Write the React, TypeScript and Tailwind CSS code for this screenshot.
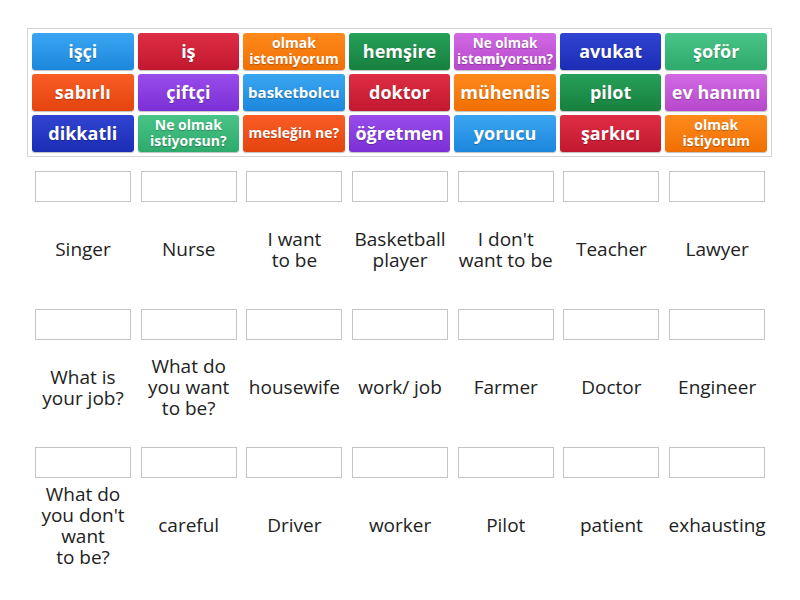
import React from 'react';

type Tile = { label: React.ReactNode; tone: keyof typeof TONES; size: string };

const TONES = {
  blue: 'from-[#3aa6f2] to-[#1b87dc]',
  red: 'from-[#de2d45] to-[#c2182f]',
  orange: 'from-[#ff8a1c] to-[#f06f00]',
  darkgreen: 'from-[#26a058] to-[#17803f]',
  pink: 'from-[#d26ae4] to-[#b747cc]',
  navy: 'from-[#3044d2] to-[#1c2db5]',
  green: 'from-[#48c488] to-[#2eaa6c]',
  redorange: 'from-[#f95d24] to-[#e4430d]',
  purple: 'from-[#9a4cec] to-[#7b2fd6]',
};

const BIG = 'text-[18px] leading-[20px]';
const TWO = 'text-[14px] leading-[16px]';

const TILES: Tile[] = [
  { label: 'işçi', tone: 'blue', size: BIG },
  { label: 'iş', tone: 'red', size: BIG },
  { label: <>olmak<br />istemiyorum</>, tone: 'orange', size: TWO },
  { label: 'hemşire', tone: 'darkgreen', size: BIG },
  {
    label: <>Ne olmak<br />ist<span className="font-extrabold">emi</span>yorsun?</>,
    tone: 'pink',
    size: 'text-[13.5px] leading-[16px]',
  },
  { label: 'avukat', tone: 'navy', size: BIG },
  { label: 'şoför', tone: 'green', size: BIG },

  { label: 'sabırlı', tone: 'redorange', size: BIG },
  { label: 'çiftçi', tone: 'purple', size: BIG },
  { label: 'basketbolcu', tone: 'blue', size: 'text-[15px] leading-[18px]' },
  { label: 'doktor', tone: 'red', size: BIG },
  { label: 'mühendis', tone: 'orange', size: BIG },
  { label: 'pilot', tone: 'darkgreen', size: BIG },
  { label: 'ev hanımı', tone: 'pink', size: BIG },

  { label: 'dikkatli', tone: 'navy', size: BIG },
  { label: <>Ne olmak<br />istiyorsun?</>, tone: 'green', size: TWO },
  { label: 'mesleğin ne?', tone: 'redorange', size: 'text-[14px] leading-[17px]' },
  { label: 'öğretmen', tone: 'purple', size: BIG },
  { label: 'yorucu', tone: 'blue', size: BIG },
  { label: 'şarkıcı', tone: 'red', size: BIG },
  { label: <>olmak<br />istiyorum</>, tone: 'orange', size: TWO },
];

const ROWS: string[][] = [
  ['Singer', 'Nurse', 'I want\nto be', 'Basketball\nplayer', "I don't\nwant to be", 'Teacher', 'Lawyer'],
  ['What is\nyour job?', 'What do\nyou want\nto be?', 'housewife', 'work/ job', 'Farmer', 'Doctor', 'Engineer'],
  ["What do\nyou don't\nwant\nto be?", 'careful', 'Driver', 'worker', 'Pilot', 'patient', 'exhausting'],
];

export default function App() {
  return (
    <div className="w-[800px] h-[600px] bg-white font-['Open_Sans',sans-serif] overflow-hidden">
      <div className="pl-[27px] pt-[28px] pr-[28px]">
        {/* word tiles */}
        <div className="border border-[#d4d4d4] p-1 grid grid-cols-7 gap-1">
          {TILES.map((t, i) => (
            <div
              key={i}
              className={`h-[37px] rounded-[3px] bg-linear-to-b ${TONES[t.tone]} flex items-center justify-center text-center text-white font-bold ${t.size} shadow-[0_1px_1px_rgba(0,0,0,0.25)] [text-shadow:0_1px_1px_rgba(0,0,0,0.25)]`}
            >
              <span className="-mt-[2px]">{t.label}</span>
            </div>
          ))}
        </div>

        {/* answer slots */}
        <div className="pl-[8px] pt-[14px] flex flex-col gap-[15px]">
          {ROWS.map((row, r) => (
            <div key={r} className="grid grid-cols-[repeat(7,96px)] gap-x-[9.7px]">
              {row.map((txt) => (
                <div key={txt} className="flex flex-col items-center">
                  <div className="w-[96px] h-[31px] border border-[#c4c4c4] bg-white" />
                  <div className="h-[92px] pt-[3px] w-[110px] flex items-center justify-center text-center whitespace-pre-line text-[19px] leading-[21px] text-[#222]">
                    {txt}
                  </div>
                </div>
              ))}
            </div>
          ))}
        </div>
      </div>
    </div>
  );
}
